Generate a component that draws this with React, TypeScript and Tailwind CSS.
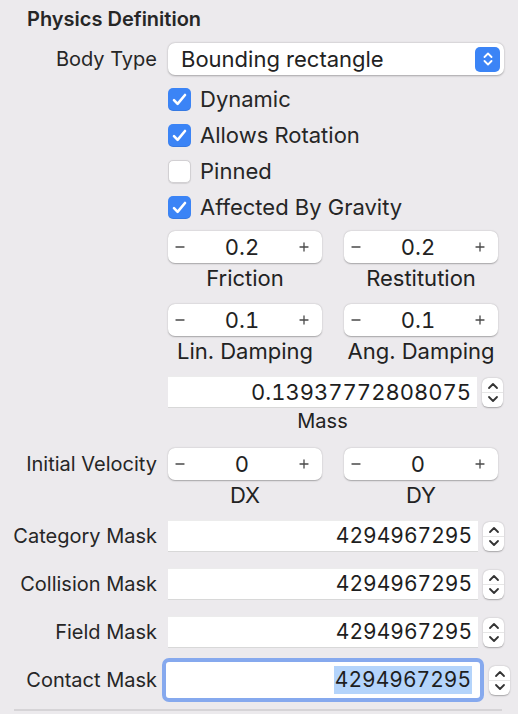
import type { ReactNode } from "react";

const font = { fontFamily: "Inter, 'Noto Sans', sans-serif" };

function Label({ children }: { children?: ReactNode }) {
  return (
    <div className="w-[157px] shrink-0 text-right text-[20px] text-[#262626] whitespace-nowrap">
      {children}
    </div>
  );
}

function Row({ label, children, className = "" }: { label?: string; children: ReactNode; className?: string }) {
  return (
    <div className={`flex items-center ${className}`}>
      <Label>{label}</Label>
      <div className="ml-[11px] flex-1 flex items-center">{children}</div>
    </div>
  );
}

function Check({ checked, text }: { checked: boolean; text: string }) {
  return (
    <div className="flex items-center h-[22px]">
      {checked ? (
        <div className="w-[23px] h-[23px] rounded-[5px] bg-[#3b84f6] flex items-center justify-center shadow-[inset_0_-1px_0_rgba(0,0,0,0.08)]">
          <svg width="15" height="13" viewBox="0 0 15 13" fill="none">
            <path d="M2 7.2 L5.6 10.8 L13 2" stroke="white" strokeWidth="2.6" strokeLinecap="round" strokeLinejoin="round" />
          </svg>
        </div>
      ) : (
        <div className="w-[23px] h-[23px] rounded-[5px] bg-white border border-[#d2d0d3] shadow-[0_0.5px_1px_rgba(0,0,0,0.1)]" />
      )}
      <span className="ml-[9px] text-[22px] text-[#262626] whitespace-nowrap">{text}</span>
    </div>
  );
}

function Stepper({ value, label }: { value: string; label: string }) {
  return (
    <div className="w-[154px] flex flex-col items-center">
      <div className="w-full h-[32px] bg-white rounded-[7px] shadow-[0_0.5px_1.5px_rgba(0,0,0,0.3)] flex items-center justify-between pl-[7px] pr-[13px]">
        <svg width="10" height="10" viewBox="0 0 10 10" fill="none">
          <path d="M1 5 H9" stroke="#4a4a4a" strokeWidth="1.3" strokeLinecap="round" />
        </svg>
        <span className="text-[22px] text-[#222] leading-none tabular-nums">{value}</span>
        <svg width="10" height="10" viewBox="0 0 10 10" fill="none">
          <path d="M1 5 H9 M5 1 V9" stroke="#4a4a4a" strokeWidth="1.3" strokeLinecap="round" />
        </svg>
      </div>
      <div className="mt-[3px] text-[22px] text-[#222] leading-[24px] whitespace-nowrap">{label}</div>
    </div>
  );
}

function Arrows() {
  return (
    <div className="ml-[5px] w-[21px] h-[29px] bg-white rounded-[6px] shadow-[0_0.5px_1.5px_rgba(0,0,0,0.3)] flex flex-col items-center justify-center">
      <svg width="12" height="8" viewBox="0 0 12 8" fill="none">
        <path d="M2 6 L6 2 L10 6" stroke="#333" strokeWidth="1.8" strokeLinecap="round" strokeLinejoin="round" />
      </svg>
      <div className="w-full h-px bg-[#e6e6e6] my-[2px]" />
      <svg width="12" height="8" viewBox="0 0 12 8" fill="none">
        <path d="M2 2 L6 6 L10 2" stroke="#333" strokeWidth="1.8" strokeLinecap="round" strokeLinejoin="round" />
      </svg>
    </div>
  );
}

function NumberField({ value, width = "w-[310px]", size = "text-[21px]" }: { value: string; width?: string; size?: string }) {
  return (
    <div className="flex items-center">
      <div className={`${width} ${size} h-[32px] bg-white border-b border-[#d8d8d8] border-t border-t-[#ececec] flex items-center justify-end pr-[6px] text-[#1e1e1e] tabular-nums`}>
        {value}
      </div>
      <Arrows />
    </div>
  );
}

function FocusedField({ value }: { value: string }) {
  return (
    <div className="flex items-center">
      <div className="-ml-[6px] w-[322px] h-[44px] rounded-[7px] border-[4px] border-[#86a9ee] bg-white flex items-center justify-end pr-[8px] text-[21px] text-[#1e1e1e] tabular-nums">
        <span className="bg-[#b4d4fb] h-[28px] leading-[28px] px-[1px]">{value}</span>
      </div>
      <Arrows />
    </div>
  );
}

export default function App() {
  return (
    <div className="w-full h-[714px] bg-[#eceaed] overflow-hidden" style={font}>
      <div className="pt-[7px] pl-[27px] text-[20px] font-semibold text-[#262626] leading-[24px]">
        Physics Definition
      </div>

      <Row label="Body Type" className="mt-[12px]">
        <div className="w-[336px] h-[32px] bg-white rounded-[7px] shadow-[0_0.5px_2px_rgba(0,0,0,0.3)] flex items-center justify-between pl-[13px] pr-[4px]">
          <span className="text-[22px] text-[#222]">Bounding rectangle</span>
          <div className="w-[25px] h-[25px] rounded-[5px] bg-[#3b84f6] flex flex-col items-center justify-center gap-[2px]">
            <svg width="10" height="6" viewBox="0 0 10 6" fill="none">
              <path d="M1.5 5 L5 1.5 L8.5 5" stroke="white" strokeWidth="1.8" strokeLinecap="round" strokeLinejoin="round" />
            </svg>
            <svg width="10" height="6" viewBox="0 0 10 6" fill="none">
              <path d="M1.5 1 L5 4.5 L8.5 1" stroke="white" strokeWidth="1.8" strokeLinecap="round" strokeLinejoin="round" />
            </svg>
          </div>
        </div>
      </Row>

      <div className="ml-[168px] mt-[13px] flex flex-col gap-[14px]">
        <Check checked text="Dynamic" />
        <Check checked text="Allows Rotation" />
        <Check checked={false} text="Pinned" />
        <Check checked text="Affected By Gravity" />
      </div>

      <div className="ml-[168px] mt-[13px] flex gap-[22px]">
        <Stepper value="0.2" label="Friction" />
        <Stepper value="0.2" label="Restitution" />
      </div>

      <div className="ml-[168px] mt-[14px] flex gap-[22px]">
        <Stepper value="0.1" label="Lin. Damping" />
        <Stepper value="0.1" label="Ang. Damping" />
      </div>

      <div className="ml-[168px] mt-[13px] flex flex-col">
        <NumberField value="0.13937772808075" width="w-[309px]" size="text-[22px]" />
        <div className="w-[309px] text-center text-[20px] text-[#222] leading-[24px] mt-[1px]">Mass</div>
      </div>

      <div className="mt-[15px] flex items-start">
        <div className="w-[157px] h-[32px] flex items-center justify-end text-[20px] text-[#262626] whitespace-nowrap">Initial Velocity</div>
        <div className="ml-[11px] flex gap-[22px]">
          <Stepper value="0" label="DX" />
          <Stepper value="0" label="DY" />
        </div>
      </div>

      <div className="mt-[13px] flex flex-col gap-[16px]">
        <Row label="Category Mask">
          <NumberField value="4294967295" />
        </Row>
        <Row label="Collision Mask">
          <NumberField value="4294967295" />
        </Row>
        <Row label="Field Mask">
          <NumberField value="4294967295" />
        </Row>
        <Row label="Contact Mask" className="-my-[6px]">
          <FocusedField value="4294967295" />
        </Row>
      </div>

      <div className="mt-[13px] ml-[14px] w-[488px] h-[2px] bg-[#d6d4d7]" />
    </div>
  );
}
